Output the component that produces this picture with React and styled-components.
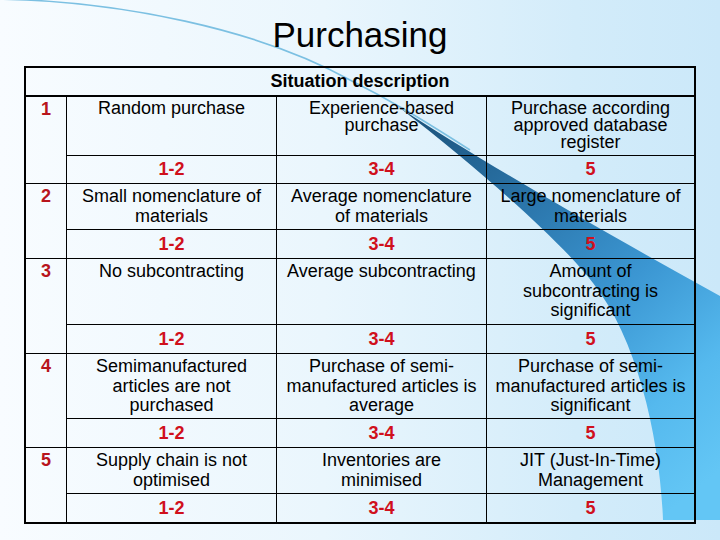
import React from "react";
import styled, { createGlobalStyle } from "styled-components";

const Global = createGlobalStyle`
  html, body { margin: 0; padding: 0; }
  body { font-family: "Liberation Sans", Arial, sans-serif; }
`;

const Slide = styled.div`
  position: relative;
  width: 720px;
  height: 540px;
  overflow: hidden;
  background: linear-gradient(to right, #f8fcff 0%, #eaf6fd 45%, #d3ecfa 80%, #cbe8f9 100%);
  display: flex;
  flex-direction: column;
  align-items: center;
  padding-top: 15px;
  box-sizing: border-box;
`;

const Decor = styled.svg`
  position: absolute;
  left: 0;
  top: 0;
  z-index: 0;
  pointer-events: none;
`;

const Title = styled.h1`
  position: relative;
  z-index: 1;
  margin: 0 0 11px 0;
  font-family: "Liberation Sans", Arial, sans-serif;
  font-weight: 400;
  font-size: 35px;
  line-height: 40px;
  color: #000;
`;

const Table = styled.div`
  position: relative;
  z-index: 1;
  width: 672px;
  box-sizing: border-box;
  border: 2px solid #000;
  display: grid;
  grid-template-columns: 41px 210px 210px 207px;
  grid-template-rows: 29px 59px 28px 46px 29px 66px 29px 65px 29px 46px 28px;
  font-family: "Liberation Sans", Arial, sans-serif;
  color: #000;
`;

const Header = styled.div`
  grid-column: 1 / -1;
  border-bottom: 2px solid #000;
  display: flex;
  align-items: center;
  justify-content: center;
  font-weight: 700;
  font-size: 18px;
`;

const Cell = styled.div`
  box-sizing: border-box;
  border-right: ${(p) => (p.$last ? "none" : "1px solid #000")};
  border-bottom: ${(p) => (p.$bottom ? "none" : "1px solid #000")};
`;

const NumCell = styled(Cell)`
  grid-row: span 2;
  text-align: center;
  padding-top: 3px;
  font-weight: 700;
  font-size: 18px;
  line-height: 19.5px;
  color: #b8141c;
`;

const Desc = styled(Cell)`
  text-align: center;
  padding: 3px 2px 0;
  font-size: 18px;
  line-height: ${(p) => (p.$tight ? "17px" : "19.5px")};
`;

const Score = styled(Cell)`
  display: flex;
  align-items: center;
  justify-content: center;
  font-weight: 700;
  font-size: 18px;
  color: #d0101c;
`;

const rows = [
  {
    n: "1",
    tight: true,
    d: ["Random purchase", "Experience-based\npurchase", "Purchase according\napproved database\nregister"],
  },
  { n: "2", d: ["Small nomenclature of\nmaterials", "Average nomenclature\nof materials", "Large nomenclature of\nmaterials"] },
  {
    n: "3",
    d: ["No subcontracting", "Average subcontracting", "Amount of\nsubcontracting is\nsignificant"],
  },
  {
    n: "4",
    d: [
      "Semimanufactured\narticles are not\npurchased",
      "Purchase of semi-\nmanufactured articles is\naverage",
      "Purchase of semi-\nmanufactured articles is\nsignificant",
    ],
  },
  {
    n: "5",
    d: ["Supply chain is not\noptimised", "Inventories are\nminimised", "JIT (Just-In-Time)\nManagement"],
  },
];

const scores = ["1-2", "3-4", "5"];

function Lines({ text }) {
  const parts = text.split("\n");
  return parts.map((t, i) => (
    <React.Fragment key={i}>
      {t}
      {i < parts.length - 1 && <br />}
    </React.Fragment>
  ));
}

export default function App() {
  return (
    <>
      <Global />
      <Slide>
        <Decor width="720" height="540" viewBox="0 0 720 540">
          <defs>
            <linearGradient id="wedge" gradientUnits="userSpaceOnUse" x1="430" y1="120" x2="720" y2="470">
              <stop offset="0" stopColor="#1d5680" />
              <stop offset="0.3" stopColor="#2c78ae" />
              <stop offset="0.55" stopColor="#3b96d2" />
              <stop offset="0.8" stopColor="#55b9ee" />
              <stop offset="1" stopColor="#63c6f5" />
            </linearGradient>
          </defs>
          <path
            d="M -10 -1 C 120 0, 260 30, 350 80 C 390 100, 420 118, 470 150"
            fill="none"
            stroke="#7cc0e2"
            strokeWidth="1.6"
          />
          <path
            d="M 400 108 C 480 160, 600 230, 720 296 L 720 520 L 663 520 C 660 440, 638 340, 593 283 C 560 240, 480 170, 400 108 Z"
            fill="url(#wedge)"
          />
        </Decor>
        <Title>Purchasing</Title>
        <Table>
          <Header>Situation description</Header>
          {rows.map((r, ri) => {
            const lastRow = ri === rows.length - 1;
            return (
              <React.Fragment key={r.n}>
                <NumCell $bottom={lastRow}>{r.n}</NumCell>
                {r.d.map((t, ci) => (
                  <Desc key={"d" + ci} $tight={r.tight} $last={ci === 2}>
                    <Lines text={t} />
                  </Desc>
                ))}
                {scores.map((s, ci) => (
                  <Score key={"s" + ci} $last={ci === 2} $bottom={lastRow}>
                    {s}
                  </Score>
                ))}
              </React.Fragment>
            );
          })}
        </Table>
      </Slide>
    </>
  );
}
